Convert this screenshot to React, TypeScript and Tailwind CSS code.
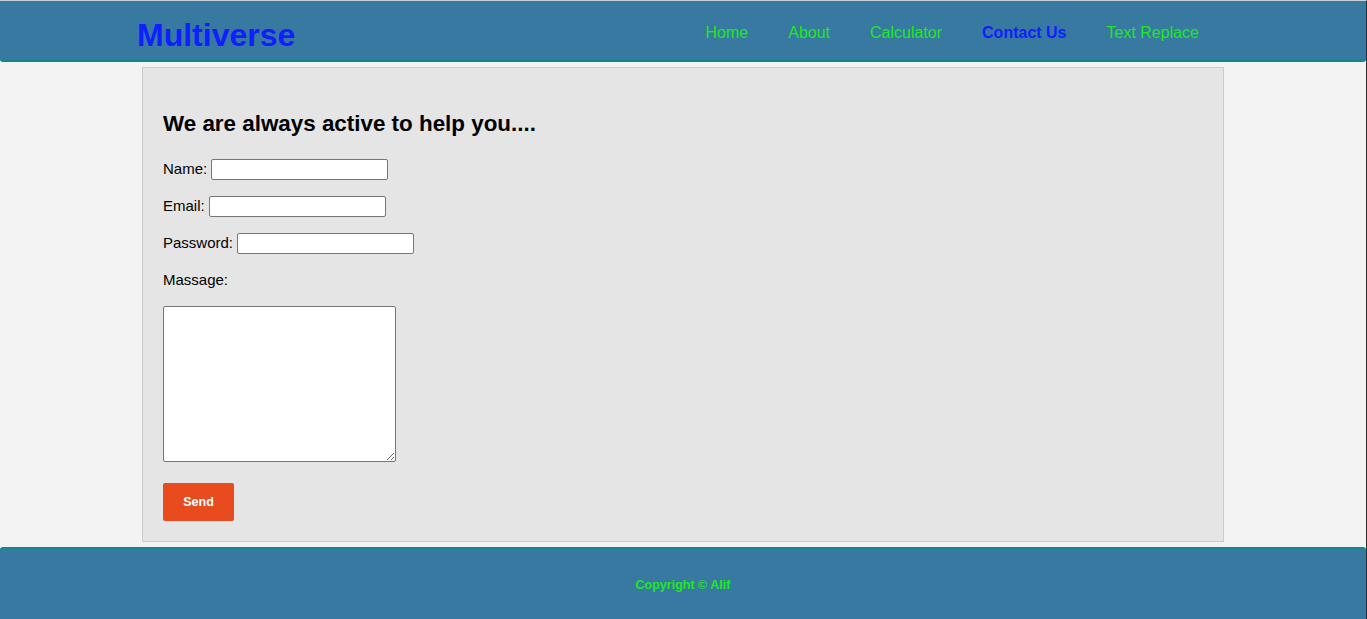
import React from "react";

const navLinks = [
  { label: "Home", active: false },
  { label: "About", active: false },
  { label: "Calculator", active: false },
  { label: "Contact Us", active: true },
  { label: "Text Replace", active: false },
];

const Field: React.FC<{ label: string; type?: string }> = ({ label, type = "text" }) => (
  <div className="flex items-center h-[21px] text-[15px] text-black">
    <label>{label}</label>
    <input
      type={type}
      className="ml-[4px] w-[177px] h-[21px] bg-white border border-[#767676] rounded-[2px] px-[2px] text-[13px] outline-none"
    />
  </div>
);

export default function App() {
  return (
    <div
      className="min-h-[619px] bg-[#f3f3f3] border-t border-[#c9d0d6] border-r border-r-[#2e2e2e] flex flex-col"
      style={{ fontFamily: '"Liberation Sans", Arial, sans-serif' }}
    >
      <header className="h-[61px] bg-[#3779a1] border-b-2 border-[#10878f] rounded-b-[3px] flex items-start pl-[137px] pr-[167px]">
        <h1 className="mt-[16px] text-[32px] leading-[1.15] font-bold text-[#0f1fff]">Multiverse</h1>
        <nav className="ml-auto mt-[23px] flex gap-[40px]">
          {navLinks.map((l) => (
            <a
              key={l.label}
              href="#"
              className={`text-[16px] leading-[1.15] ${l.active ? "font-bold text-[#0f1fff]" : "text-[#1fe81f]"}`}
            >
              {l.label}
            </a>
          ))}
        </nav>
      </header>

      <main className="mx-[142px] mt-[5px] bg-[#e5e5e5] border border-[#cccccc] px-5 pt-5 pb-5">
        <h2 className="mt-[23px] text-[22.4px] leading-[1.15] font-bold text-black">
          We are always active to help you....
        </h2>
        <form className="mt-[22px] flex flex-col" onSubmit={(e) => e.preventDefault()}>
          <div className="flex flex-col gap-[16px]">
            <Field label="Name:" />
            <Field label="Email:" />
            <Field label="Password:" type="password" />
            <div className="flex items-center h-[21px] text-[15px] text-black">
              <label>Massage:</label>
            </div>
          </div>
          <textarea className="mt-[15px] w-[233px] h-[156px] bg-white border border-[#767676] rounded-[2px] outline-none" />
          <button
            type="submit"
            className="mt-[21px] w-[71px] h-[38px] pt-[2px] bg-[#e84b1e] text-white text-[12.5px] font-bold rounded-[2px]"
          >
            Send
          </button>
        </form>
      </main>

      <footer className="mt-[5px] h-[72px] pt-[3px] bg-[#3779a1] border-t-2 border-[#10878f] rounded-t-[3px] flex items-center justify-center">
        <p className="text-[12.5px] font-bold text-[#1fe81f]">Copyright © Alif</p>
      </footer>
    </div>
  );
}
